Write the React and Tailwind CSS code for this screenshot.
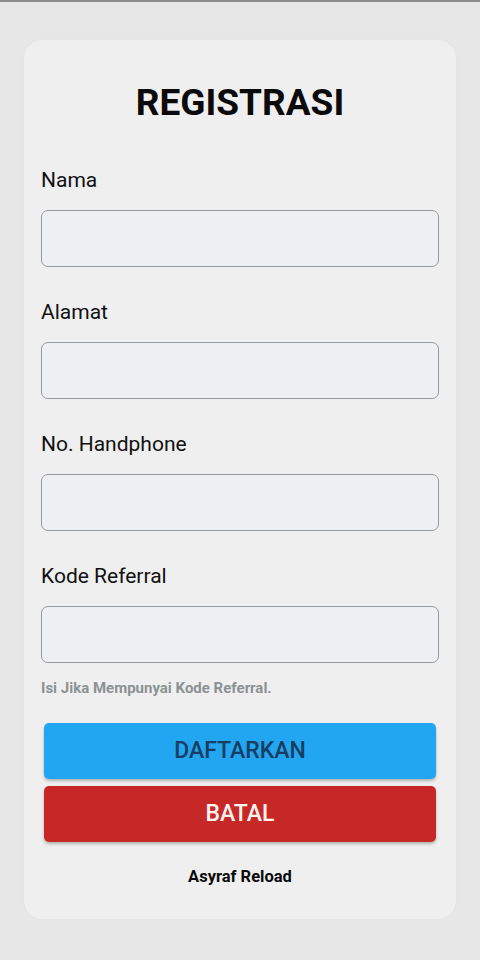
export default function App() {
  const fields = ["Nama", "Alamat", "No. Handphone", "Kode Referral"];

  return (
    <div
      className="min-h-screen bg-[#e7e7e7] border-t-2 border-[#8d8d8d] pt-[38px] px-[24px]"
      style={{ fontFamily: "Roboto, 'Noto Sans', sans-serif" }}
    >
      <div className="bg-[#efefef] rounded-[18px] px-[17px] pt-[41px] pb-[31px] shadow-[0_0_2px_rgba(0,0,0,0.04)]">
        <h1 className="text-center text-[37px] leading-[44px] font-bold text-[#0a0a0a]">REGISTRASI</h1>

        <div className="mt-[41px]">
          {fields.map((label, i) => (
            <div key={label} className={i > 0 ? "mt-[31px]" : ""}>
              <label className="block text-[21px] leading-[28px] text-[#111]">{label}</label>
              <input
                type="text"
                className="mt-[16px] block w-full h-[57px] rounded-[7px] border-[1.5px] border-[#959aa0] bg-[#eff0f1] px-3 text-[18px] outline-none"
              />
            </div>
          ))}
        </div>

        <p className="mt-[15px] text-[15px] leading-[20px] font-bold text-[#8c9293]">
          Isi Jika Mempunyai Kode Referral.
        </p>

        <div className="mt-[25px] px-[3px] flex flex-col gap-[7px]">
          <button className="h-[56px] w-full rounded-[5px] bg-[#22a6f1] text-[23px] font-medium text-[#163d62] shadow-[0_2px_3px_rgba(0,0,0,0.25)]">
            DAFTARKAN
          </button>
          <button className="h-[56px] w-full rounded-[5px] bg-[#c62828] text-[23px] font-medium text-[#fff2ee] shadow-[0_2px_3px_rgba(0,0,0,0.25)]">
            BATAL
          </button>
        </div>

        <p className="mt-[24px] text-center text-[16.5px] leading-[22px] font-bold text-[#0a0a0a]">Asyraf Reload</p>
      </div>
    </div>
  );
}
